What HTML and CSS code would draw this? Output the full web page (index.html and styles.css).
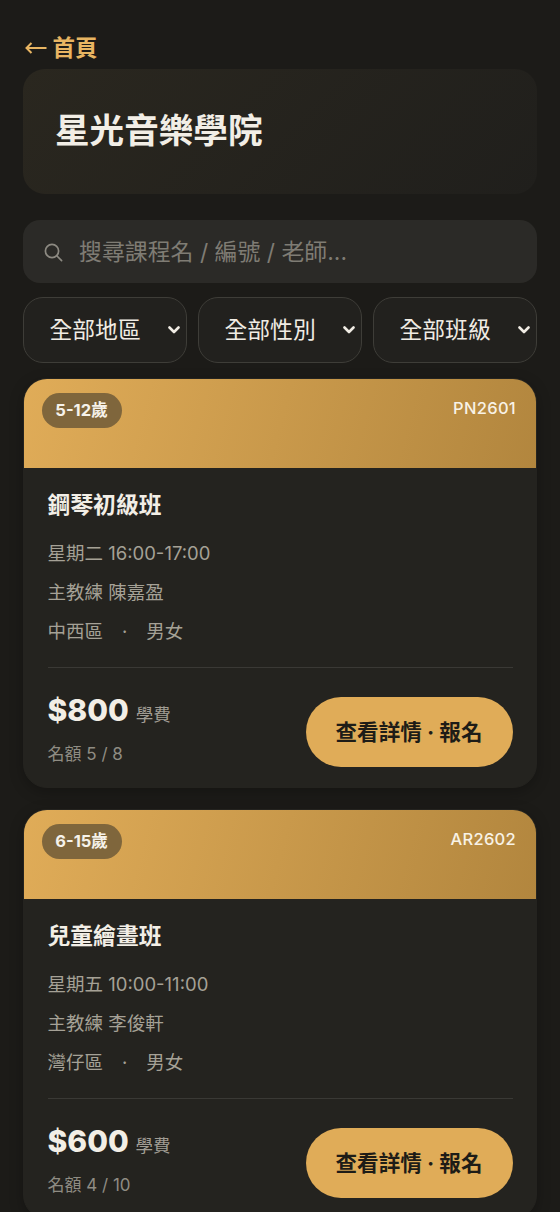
FILE: index.html
```html
<!DOCTYPE html>
<html lang="zh-Hant">
<head>
<meta charset="utf-8">
<title>星光音樂學院</title>
<link rel="stylesheet" href="styles.css">
</head>
<body>
<main class="page">
  <a class="back" href="#"><svg class="arrow" viewBox="0 0 22 12" width="22" height="12"><path d="M21.5 6H1.5M6.5 1L1.5 6l5 5"/></svg>首頁</a>
  <header class="hero"><h1>星光音樂學院</h1></header>
  <div class="search">
    <svg class="search-icon" viewBox="0 0 20 20" width="20" height="20"><circle cx="9" cy="9" r="6.6"/><path d="M14 14l4.6 4.6"/></svg>
    <input class="search-input" type="text" placeholder="搜尋課程名 / 編號 / 老師...">
  </div>
  <div class="filters">
    <div class="filter"><span>全部地區</span><svg class="chev" viewBox="0 0 12 8" width="12" height="8"><path d="M1.5 1.5L6 6l4.5-4.5"/></svg></div>
    <div class="filter"><span>全部性別</span><svg class="chev" viewBox="0 0 12 8" width="12" height="8"><path d="M1.5 1.5L6 6l4.5-4.5"/></svg></div>
    <div class="filter"><span>全部班級</span><svg class="chev" viewBox="0 0 12 8" width="12" height="8"><path d="M1.5 1.5L6 6l4.5-4.5"/></svg></div>
  </div>
  <article class="card">
    <div class="banner"><span class="badge">5-12歲</span><span class="code">PN2601</span></div>
    <div class="body">
      <h2>鋼琴初級班</h2>
      <p class="info">星期二 16:00-17:00</p>
      <p class="info">主教練 陳嘉盈</p>
      <p class="info"><span>中西區</span><span class="dot">·</span><span>男女</span></p>
      <div class="foot">
        <div class="price-box">
          <div class="price"><strong>$800</strong> <span>學費</span></div>
          <div class="quota">名額 5 / 8</div>
        </div>
        <a class="cta" href="#">查看詳情 · 報名</a>
      </div>
    </div>
  </article>
  <article class="card">
    <div class="banner"><span class="badge">6-15歲</span><span class="code">AR2602</span></div>
    <div class="body">
      <h2>兒童繪畫班</h2>
      <p class="info">星期五 10:00-11:00</p>
      <p class="info">主教練 李俊軒</p>
      <p class="info"><span>灣仔區</span><span class="dot">·</span><span>男女</span></p>
      <div class="foot">
        <div class="price-box">
          <div class="price"><strong>$600</strong> <span>學費</span></div>
          <div class="quota">名額 4 / 10</div>
        </div>
        <a class="cta" href="#">查看詳情 · 報名</a>
      </div>
    </div>
  </article>
</main>
</body>
</html>
```
FILE: styles.css
```css
* { box-sizing: border-box; }
html, body { margin: 0; padding: 0; background: #1c1b18; height: 1212px; overflow: hidden; }
body { font-family: Inter, "Noto Sans CJK TC", sans-serif; color: #f0ece4; }
.page { padding: 33px 23px 0; display: flex; flex-direction: column; }
.back { color: #e8b562; font-size: 22.5px; font-weight: 600; line-height: 32px; text-decoration: none; height: 36px; display: flex; align-items: flex-start; gap: 6px; padding-left: 1.5px; margin-top: -1px; margin-bottom: 1px; }
.arrow { fill: none; stroke: #e8b562; stroke-width: 2; flex: none; margin-top: 10px; }
.hero { height: 125px; border-radius: 22px; background: linear-gradient(135deg, #2a271f, #201f1c); padding: 0 32px 2px; display: flex; align-items: center; }
.hero h1 { margin: 0; font-size: 34.6px; font-weight: 700; line-height: 1.2; color: #f2eee6; }
.search { margin-top: 26px; height: 63px; border-radius: 17px; background: #2b2a27; display: flex; align-items: center; padding: 0 20px; gap: 16px; }
.search-icon { fill: none; stroke: #8d8a82; stroke-width: 1.7; stroke-linecap: round; flex: none; }
.search-input { flex: 1; min-width: 0; background: none; border: 0; outline: 0; font: 400 22.9px Inter, "Noto Sans CJK TC", sans-serif; color: #f0ece4; padding: 0; }
.search-input::placeholder { color: #7f7c74; opacity: 1; }
.filters { margin-top: 14px; display: grid; grid-template-columns: repeat(3, 1fr); gap: 11px; }
.filter { height: 66px; border-radius: 20px; border: 1.5px solid #3e3d38; background: #22211e; display: flex; align-items: center; justify-content: space-between; padding: 0 6px 3px 25.5px; font-size: 22.8px; color: #f0ece4; }
.chev { fill: none; stroke: #f0ece4; stroke-width: 2.6; stroke-linecap: round; stroke-linejoin: round; flex: none; margin-top: 3px; }
.card { margin-top: 15px; border-radius: 24px; background: #24231f; border: 1.5px solid #24231f; overflow: hidden; height: 410px; box-shadow: 0 4px 14px rgba(0,0,0,.25); flex: none; }
.card + .card { margin-top: 21px; }
.banner { height: 88.5px; background: linear-gradient(105deg, #e0ac58, #b2863e); padding: 13.5px 20px 0 17.5px; display: flex; justify-content: space-between; align-items: flex-start; }
.badge { height: 35px; width: 80px; border-radius: 18px; background: #7f663c; color: #f6f2ea; font-size: 16.5px; font-weight: 700; padding-bottom: 3px; display: flex; align-items: center; justify-content: center; }
.code { color: #f8f2e6; font-size: 16.5px; font-weight: 500; letter-spacing: .3px; line-height: 30px; }
.body { padding: 19px 23.5px 0; }
.body h2 { margin: 0 0 11px; font-size: 22.8px; font-weight: 700; line-height: 36px; color: #f2eee6; }
.info { margin: 0; font-size: 18.5px; line-height: 39px; color: #a5a196; }
.dot { margin: 0 19px; }
.foot { margin-top: 16px; border-top: 1.5px solid #3a3935; padding-top: 29px; display: flex; justify-content: space-between; align-items: flex-start; }
.price { line-height: 30px; font-size: 17.5px; color: #a09c93; margin-top: -2px; }
.price strong { font-size: 30px; font-weight: 800; color: #f2eee6; }
.price span { font-weight: 400; margin-left: 2px; }
.quota { margin-top: 11px; font-size: 17px; line-height: 26px; color: #8f8c83; }
.cta { width: 207px; height: 70px; border-radius: 35px; background: #e0ac58; color: #1e1c17; font-size: 21.6px; font-weight: 700; text-decoration: none; padding-bottom: 2px; display: flex; align-items: center; justify-content: center; }
```
